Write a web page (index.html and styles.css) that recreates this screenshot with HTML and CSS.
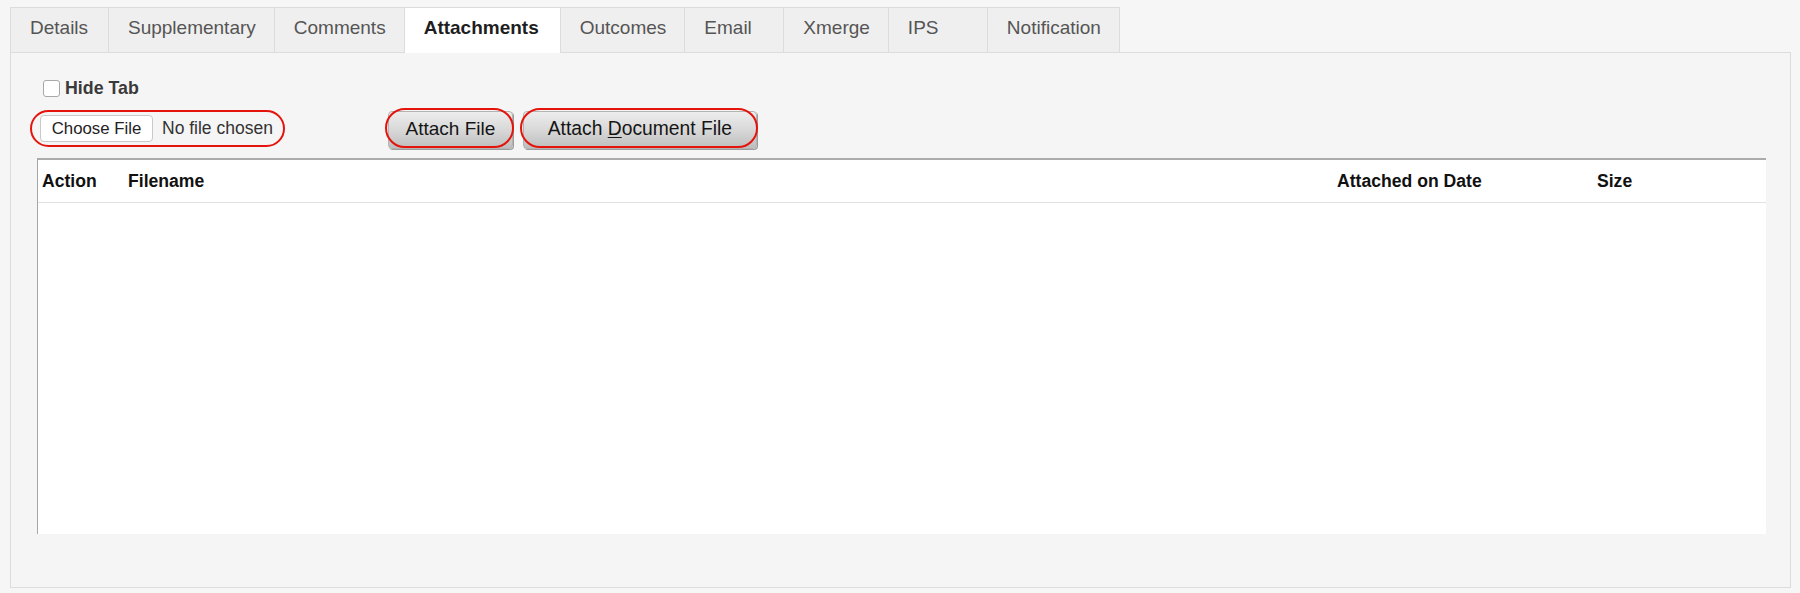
FILE: index.html
```html
<!DOCTYPE html>
<html lang="en">
<head>
<meta charset="utf-8">
<title>Attachments</title>
<link rel="stylesheet" href="styles.css">
</head>
<body>
<div class="wrap">
  <ul class="tabs">
    <li class="tab">Details</li>
    <li class="tab">Supplementary</li>
    <li class="tab">Comments</li>
    <li class="tab active">Attachments</li>
    <li class="tab">Outcomes</li>
    <li class="tab">Email</li>
    <li class="tab">Xmerge</li>
    <li class="tab">IPS</li>
    <li class="tab">Notification</li>
  </ul>
  <div class="panel">
    <label class="hide-row"><input type="checkbox" class="check"><span>Hide Tab</span></label>
    <div class="file-row">
      <span class="filewrap"><span class="choose">Choose File</span><span class="nofile">No file chosen</span></span>
      <button class="btn btn-attach" type="button">Attach File</button>
      <button class="btn btn-doc" type="button">Attach <u>D</u>ocument File</button>
    </div>
    <div class="grid">
      <table class="files">
        <colgroup>
          <col class="c-action">
          <col class="c-name">
          <col class="c-date">
          <col>
        </colgroup>
        <thead>
          <tr><th>Action</th><th>Filename</th><th>Attached on Date</th><th>Size</th></tr>
        </thead>
        <tbody></tbody>
      </table>
    </div>
  </div>
</div>
</body>
</html>
```

FILE: styles.css
```css
html, body {
  margin: 0;
  padding: 0;
  background: #f6f6f6;
  font-family: "Liberation Sans", Arial, Helvetica, sans-serif;
}

.wrap {
  margin: 7px 9px 0 10px;
}

.tabs {
  display: flex;
  list-style: none;
  margin: 0 0 -1px 0;
  padding: 0;
  align-items: flex-start;
}

.tab {
  box-sizing: border-box;
  min-width: 100px;
  height: 45px;
  padding: 0 18px 4px 19px;
  border: 1px solid #dcdcdc;
  border-bottom: 0;
  margin-left: -1px;
  background: #efefef;
  color: #555;
  font-size: 19px;
  line-height: 40px;
  white-space: nowrap;
}

.tab:first-child {
  margin-left: 0;
  min-width: 99px;
}

.tab.active {
  height: 46px;
  padding-right: 21px;
  background: #fff;
  color: #1e1e1e;
  font-weight: bold;
  position: relative;
  z-index: 1;
}

.panel {
  box-sizing: border-box;
  height: 536px;
  border: 1px solid #dcdcdc;
  background: #f5f5f5;
  padding: 27px 24px 0 19px;
  display: flex;
  flex-direction: column;
  align-items: stretch;
}

.hide-row {
  display: flex;
  align-items: center;
  height: 17px;
  margin-left: 13px;
  font-size: 17.8px;
  line-height: 17px;
  font-weight: bold;
  color: #3a3a3a;
  align-self: flex-start;
}

.check {
  -webkit-appearance: none;
  appearance: none;
  box-sizing: border-box;
  width: 17px;
  height: 17px;
  margin: 0 5px 0 0;
  border: 1px solid #a8a8a8;
  border-radius: 3px;
  background: #fff;
}

.file-row {
  display: flex;
  align-items: flex-start;
  height: 41px;
  margin-top: 11px;
}

.filewrap {
  box-sizing: border-box;
  display: inline-flex;
  align-items: center;
  height: 37px;
  margin-top: 2px;
  padding: 0 10px 0 8px;
  border: 2px solid #e4140c;
  border-radius: 19px;
  font-size: 17.5px;
  color: #333;
}

.choose {
  box-sizing: border-box;
  display: inline-flex;
  align-items: center;
  justify-content: center;
  width: 113px;
  height: 27px;
  border: 1px solid #c9c9c9;
  border-radius: 4px;
  background: #fff;
  color: #222;
  font-size: 16.8px;
}

.nofile {
  margin-left: 9px;
}

.btn {
  position: relative;
  box-sizing: border-box;
  height: 38px;
  margin-top: 3px;
  padding: 0 0 2px 0;
  border: 1px solid #b3b3b3;
  border-radius: 4px;
  background: linear-gradient(#ededed, #d6d6d6 55%, #bdbdbd);
  box-shadow: 1px 1px 0 #9c9c9c;
  font-family: "Liberation Sans", Arial, Helvetica, sans-serif;
  font-size: 19px;
  color: #151515;
  text-align: center;
}

.btn::after {
  content: "";
  position: absolute;
  top: -4px;
  left: -4px;
  right: -2px;
  bottom: 0;
  border: 2px solid #e4140c;
  border-radius: 20px;
}

.btn-attach {
  width: 125px;
  margin-left: 103px;
}

.btn-doc {
  width: 234px;
  margin-left: 10px;
  font-size: 19.3px;
}

.btn u {
  text-decoration: underline;
  text-underline-offset: 2px;
}

.grid {
  box-sizing: border-box;
  height: 376px;
  margin: 9px 0 0 7px;
  background: #fff;
  border-top: 2px solid #ababab;
  border-left: 1px solid #a6a6a6;
}

.files {
  width: 100%;
  table-layout: fixed;
  border-collapse: collapse;
}

.c-action { width: 90px; }
.c-name { width: 1209px; }
.c-date { width: 260px; }

.files th {
  height: 42px;
  padding: 0 0 0 4px;
  border-bottom: 1px solid #e2e2e2;
  text-align: left;
  vertical-align: middle;
  font-size: 17.6px;
  font-weight: bold;
  color: #111;
}

.files th + th {
  padding-left: 0;
}
```
